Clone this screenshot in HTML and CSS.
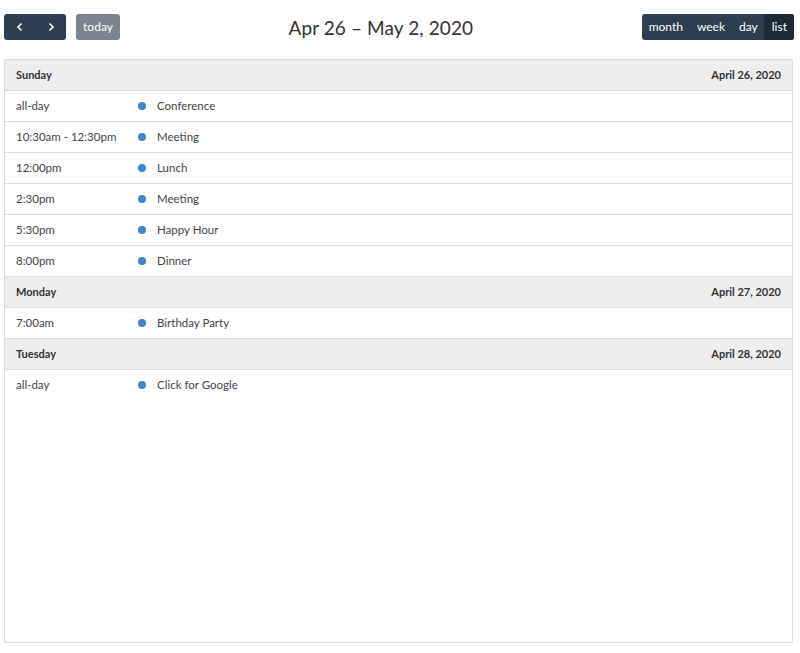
FILE: index.html
```html
<!DOCTYPE html>
<html>
<head>
<meta charset="utf-8">
<link rel="stylesheet" href="styles.css">
</head>
<body>
<div class="page">
  <div class="toolbar">
    <div class="left">
      <div class="btn-group">
        <button class="btn nav"><svg width="10" height="10" viewBox="0 0 10 10"><path d="M6.5 1.5 L3 5 L6.5 8.5" fill="none" stroke="#fff" stroke-width="1.6"/></svg></button>
        <button class="btn nav"><svg width="10" height="10" viewBox="0 0 10 10"><path d="M3.5 1.5 L7 5 L3.5 8.5" fill="none" stroke="#fff" stroke-width="1.6"/></svg></button>
      </div>
      <button class="btn today">today</button>
    </div>
    <h2 class="title">Apr 26 – May 2, 2020</h2>
    <div class="btn-group right">
      <button class="btn view">month</button>
      <button class="btn view">week</button>
      <button class="btn view">day</button>
      <button class="btn view active">list</button>
    </div>
  </div>
  <div class="list">
    <div class="day-head"><span>Sunday</span><span>April 26, 2020</span></div>
    <div class="ev"><span class="time">all-day</span><span class="dot"></span><span class="name">Conference</span></div>
    <div class="ev"><span class="time">10:30am - 12:30pm</span><span class="dot"></span><span class="name">Meeting</span></div>
    <div class="ev"><span class="time">12:00pm</span><span class="dot"></span><span class="name">Lunch</span></div>
    <div class="ev"><span class="time">2:30pm</span><span class="dot"></span><span class="name">Meeting</span></div>
    <div class="ev"><span class="time">5:30pm</span><span class="dot"></span><span class="name">Happy Hour</span></div>
    <div class="ev"><span class="time">8:00pm</span><span class="dot"></span><span class="name">Dinner</span></div>
    <div class="day-head"><span>Monday</span><span>April 27, 2020</span></div>
    <div class="ev"><span class="time">7:00am</span><span class="dot"></span><span class="name">Birthday Party</span></div>
    <div class="day-head"><span>Tuesday</span><span>April 28, 2020</span></div>
    <div class="ev"><span class="time">all-day</span><span class="dot"></span><span class="name">Click for Google</span></div>
  </div>
</div>
</body>
</html>
```
FILE: styles.css
```css
* { box-sizing: border-box; }
html, body { margin: 0; padding: 0; background: #fff; }
body { font-family: "Lato", "Open Sans", sans-serif; color: #333; }
.page { padding: 14px 6px 0 4px; }
.toolbar { display: flex; align-items: center; justify-content: space-between; height: 26px; margin-bottom: 19px; }
.left { display: flex; align-items: center; gap: 10px; }
.btn-group { display: flex; border-radius: 3px; overflow: hidden; }
.btn { border: 0; margin: 0; font-family: inherit; font-size: 12px; color: #fff; background: #2c3e50; height: 26px; line-height: 26px; padding: 0 8px; cursor: pointer; }
.btn.nav { width: 31px; padding: 0; display: flex; align-items: center; justify-content: center; }
.btn.today { background: #7b848e; border-radius: 3px; padding: 0 7px; width: 44px; }
.title { margin: 0; font-weight: 400; font-size: 19px; color: #333; letter-spacing: 0.1px; }
.right .btn.view { padding: 0 7px; }
.right .btn.view.active { background: #1e2b37; box-shadow: inset 0 0 0 1px #1a252f, 0 0 3px rgba(0,0,0,.4); }
.list { border: 1px solid #ddd; height: 584px; margin-right: 1px; }
.day-head { display: flex; justify-content: space-between; background: #eee; height: 31px; align-items: center; padding: 0 11px 1px; font-size: 11px; font-weight: 700; color: #333; border-bottom: 1px solid #ddd; }
.ev { display: flex; align-items: center; height: 31px; font-size: 11.5px; color: #444; padding: 0 0 2px 11px; border-bottom: 1px solid #ddd; }
.ev:last-child { border-bottom: 0; }
.time { width: 122px; }
.dot { width: 8px; height: 8px; border-radius: 50%; background: #3a87d0; margin-right: 11px; margin-top: 1px; }
```
